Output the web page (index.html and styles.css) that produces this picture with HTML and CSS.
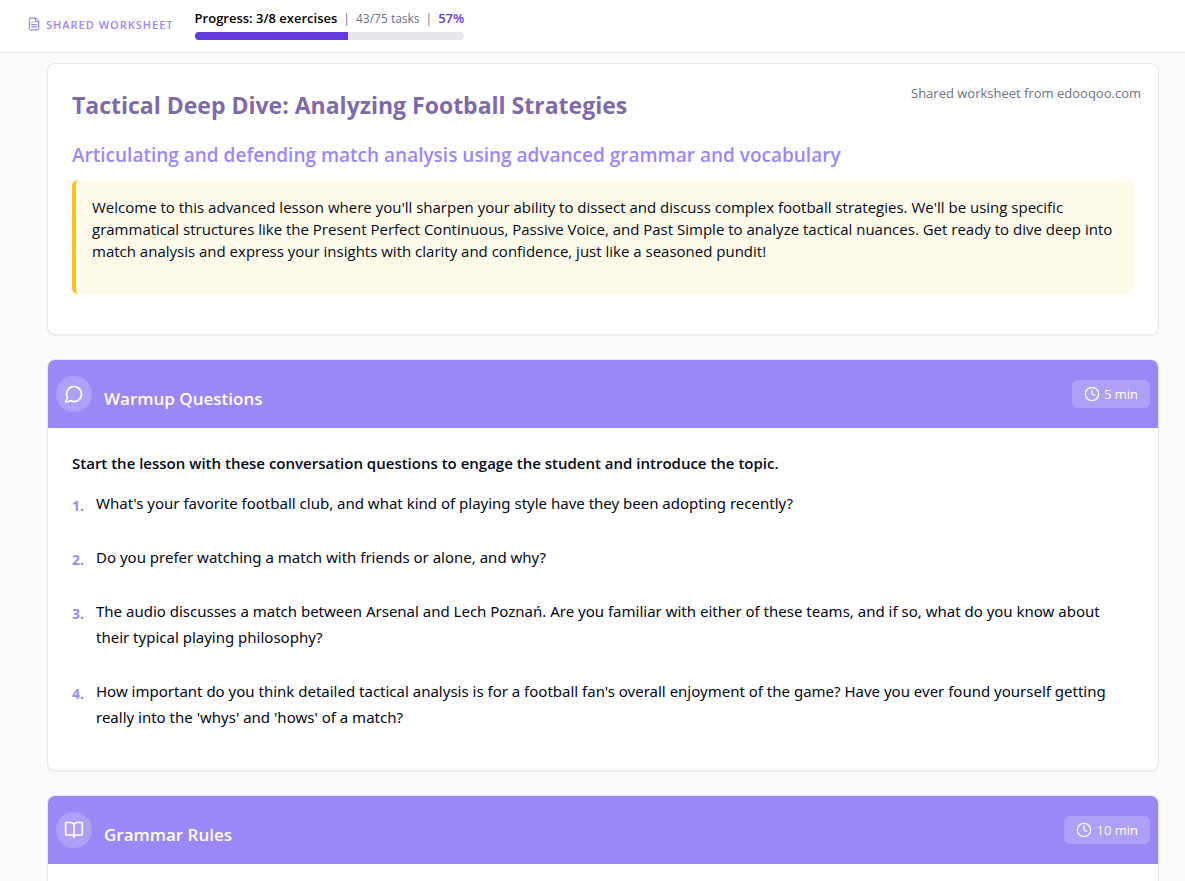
FILE: index.html
```html
<!DOCTYPE html>
<html lang="en">
<head>
  <meta charset="UTF-8" />
  <title>Tactical Deep Dive: Analyzing Football Strategies</title>
  <meta name="viewport" content="width=device-width, initial-scale=1.0"/>
  <link rel="stylesheet" href="styles.css">
</head>
<body>
  <header class="topbar">
    <div class="brand">
      <svg class="brand-icon" viewBox="0 0 24 24"><path d="M15 2H6a2 2 0 0 0-2 2v16a2 2 0 0 0 2 2h12a2 2 0 0 0 2-2V7Z"/><path d="M14 2v4a2 2 0 0 0 2 2h4"/><path d="M10 9H8"/><path d="M16 13H8"/><path d="M16 17H8"/></svg>
      <span>SHARED WORKSHEET</span>
    </div>
    <div class="progress">
      <div class="progress-info">
        <span class="progress-label">Progress: 3/8 exercises</span>
        <span class="sep">|</span>
        <span class="progress-tasks">43/75 tasks</span>
        <span class="sep">|</span>
        <span class="progress-percent">57%</span>
      </div>
      <div class="progress-track">
        <div class="progress-fill" style="width: 57%"></div>
      </div>
    </div>
  </header>

  <main class="page">
    <section class="card intro">
      <div class="intro-top">
        <h1>Tactical Deep Dive: Analyzing Football Strategies</h1>
        <p class="shared-from">Shared worksheet from edooqoo.com</p>
      </div>
      <h2>Articulating and defending match analysis using advanced grammar and vocabulary</h2>
      <div class="intro-box">
        <p>Welcome to this advanced lesson where you'll sharpen your ability to dissect and discuss complex football strategies. We'll be using specific grammatical structures like the Present Perfect Continuous, Passive Voice, and Past Simple to analyze tactical nuances. Get ready to dive deep into match analysis and express your insights with clarity and confidence, just like a seasoned pundit!</p>
      </div>
    </section>

    <section class="card">
      <div class="card-header">
        <div class="card-icon">
          <svg viewBox="0 0 24 24"><path d="M7.9 20A9 9 0 1 0 4 16.1L2 22Z"/></svg>
        </div>
        <h3>Warmup Questions</h3>
        <div class="time">
          <svg viewBox="0 0 24 24"><circle cx="12" cy="12" r="10"/><path d="M12 6v6l4 2"/></svg>
          <span>5 min</span>
        </div>
      </div>
      <div class="card-body">
        <p class="instruction">Start the lesson with these conversation questions to engage the student and introduce the topic.</p>
        <div class="questions">
          <div class="question"><span class="number">1.</span><p>What's your favorite football club, and what kind of playing style have they been adopting recently?</p></div>
          <div class="question"><span class="number">2.</span><p>Do you prefer watching a match with friends or alone, and why?</p></div>
          <div class="question"><span class="number">3.</span><p>The audio discusses a match between Arsenal and Lech Poznań. Are you familiar with either of these teams, and if so, what do you know about their typical playing philosophy?</p></div>
          <div class="question"><span class="number">4.</span><p>How important do you think detailed tactical analysis is for a football fan's overall enjoyment of the game? Have you ever found yourself getting really into the 'whys' and 'hows' of a match?</p></div>
        </div>
      </div>
    </section>

    <section class="card">
      <div class="card-header">
        <div class="card-icon">
          <svg viewBox="0 0 24 24"><path d="M12 7v14"/><path d="M3 18a1 1 0 0 1-1-1V4a1 1 0 0 1 1-1h5a4 4 0 0 1 4 4 4 4 0 0 1 4-4h5a1 1 0 0 1 1 1v13a1 1 0 0 1-1 1h-6a3 3 0 0 0-3 3 3 3 0 0 0-3-3z"/></svg>
        </div>
        <h3>Grammar Rules</h3>
        <div class="time">
          <svg viewBox="0 0 24 24"><circle cx="12" cy="12" r="10"/><path d="M12 6v6l4 2"/></svg>
          <span>10 min</span>
        </div>
      </div>
      <div class="card-body"></div>
    </section>
  </main>
</body>
</html>
```
FILE: styles.css
```css
* {
  box-sizing: border-box;
}
body {
  font-family: "Segoe UI", "Open Sans", sans-serif;
  font-size: 15px;
  background: #fbfbfb;
  margin: 0;
  color: #020817;
}
h1, h2, h3, p {
  margin: 0;
}
svg {
  fill: none;
  stroke: currentColor;
  stroke-width: 2;
  stroke-linecap: round;
  stroke-linejoin: round;
}

/* Top bar */
.topbar {
  display: flex;
  align-items: flex-start;
  gap: 21px;
  height: 53px;
  padding: 8px 27px;
  background: white;
  border-bottom: 1px solid #e2e8f0;
}
.brand {
  display: flex;
  align-items: center;
  gap: 5px;
  height: 32px;
  font-size: 11px;
  font-weight: 600;
  letter-spacing: 1px;
  color: #9b87f5;
}
.brand-icon {
  width: 14px;
  height: 14px;
}
.progress-info {
  display: flex;
  align-items: center;
  gap: 6px;
  height: 20px;
  font-size: 13px;
}
.progress-label {
  font-weight: 600;
  color: #000;
}
.sep {
  font-size: 12px;
  color: #64748b;
}
.progress-tasks {
  font-size: 12px;
  color: #64748b;
}
.progress-percent {
  font-weight: 600;
  color: #633bdb;
}
.progress-track {
  height: 8px;
  margin-top: 4px;
  background: #e5e7eb;
  border-radius: 8px;
  overflow: hidden;
}
.progress-fill {
  height: 100%;
  background: #633bdb;
}

/* Cards */
.page {
  display: flex;
  flex-direction: column;
  gap: 24px;
  padding: 10px 26px 24px 47px;
}
.card {
  background: white;
  border: 1px solid #e2e8f0;
  border-radius: 8px;
  box-shadow: 0 1px 2px rgba(0,0,0,0.05);
  overflow: hidden;
}
.intro {
  padding: 24px 24px 40px;
}
.intro-top {
  display: flex;
  justify-content: space-between;
}
h1 {
  font-size: 23px;
  line-height: 34px;
  font-weight: 700;
  color: #7e69ab;
}
.shared-from {
  margin-top: -7px;
  margin-right: -7px;
  font-size: 13px;
  line-height: 24px;
  color: #6b7280;
}
h2 {
  margin: 18px 0 10px;
  font-size: 19px;
  line-height: 30px;
  font-weight: 600;
  color: #9b87f5;
}
.intro-box {
  padding: 16px 16px 32px;
  background: #fffbeb;
  border-left: 4px solid #fbbf24;
  border-radius: 6px;
}
.intro-box p {
  line-height: 22px;
}
.card-header {
  display: flex;
  align-items: center;
  gap: 12px;
  height: 68px;
  padding: 8px;
  background: #9b87f5;
  color: white;
}
.card-icon {
  display: flex;
  align-items: center;
  justify-content: center;
  width: 36px;
  height: 36px;
  border-radius: 50%;
  background: rgba(255,255,255,0.2);
}
.card-icon svg {
  width: 20px;
  height: 20px;
}
h3 {
  flex: 1;
  padding-top: 10px;
  font-size: 17px;
  line-height: 28px;
  font-weight: 600;
}
.time {
  display: flex;
  align-items: center;
  gap: 4px;
  height: 28px;
  padding: 0 12px;
  border-radius: 6px;
  background: rgba(255,255,255,0.2);
  font-size: 13px;
}
.time svg {
  width: 16px;
  height: 16px;
}
.card-body {
  padding: 24px 24px 40px;
}
.instruction {
  margin-bottom: 16px;
  line-height: 22px;
  font-weight: 600;
}
.questions {
  display: flex;
  flex-direction: column;
  gap: 28px;
}
.question {
  display: flex;
  gap: 12px;
}
.question p {
  font-family: "Segoe UI", "Noto Sans", sans-serif;
  line-height: 26px;
}
.number {
  padding-top: 6px;
  line-height: 20px;
  font-size: 14px;
  font-weight: 700;
  color: #9b87f5;
}
```
